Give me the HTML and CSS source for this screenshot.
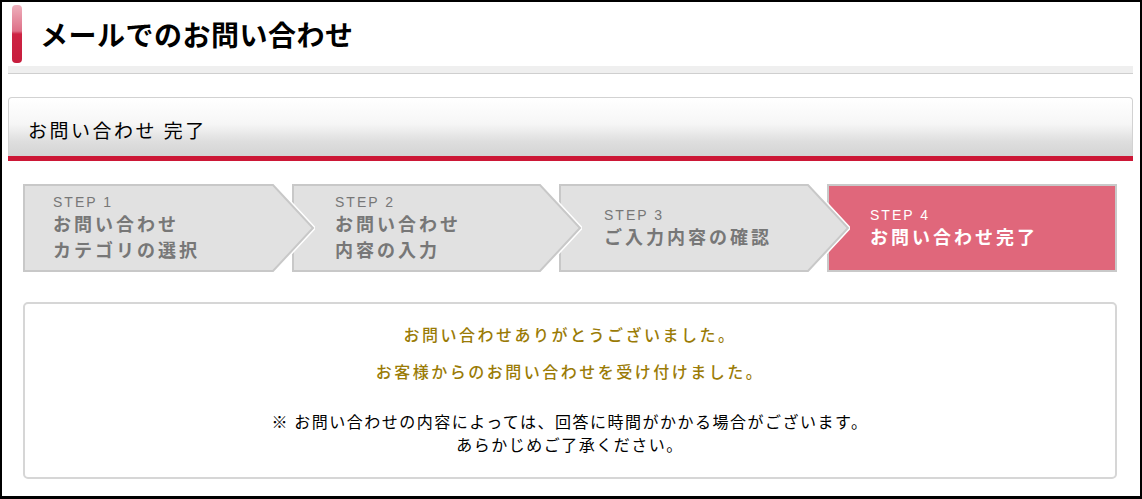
FILE: index.html
```html
<!DOCTYPE html>
<html lang="ja">
<head>
    <meta charset="UTF-8">
    <title>メールでのお問い合わせ</title>
    <link rel="stylesheet" href="styles.css">
</head>
<body>
<div class="page">
    <div class="page-title">
        <span class="title-bar"></span>
        <h1>メールでのお問い合わせ</h1>
    </div>
    <div class="title-band"></div>

    <div class="section-head">お問い合わせ 完了</div>
    <div class="section-line"></div>

    <!-- ステップ表示 -->
    <div class="steps">
        <div class="step step-1">
            <svg class="step-bg" width="292" height="88" viewBox="0 0 292 88">
                <polygon points="1,1 250,1 290,44 250,87 1,87" fill="#e1e1e1" stroke="#fff" stroke-width="5"/>
                <polygon points="1,1 250,1 290,44 250,87 1,87" fill="#e1e1e1" stroke="#c8c8c8" stroke-width="2"/>
            </svg>
            <div class="step-no">STEP 1</div>
            <div class="step-name">お問い合わせ</div>
            <div class="step-name">カテゴリの選択</div>
        </div>
        <div class="step step-2">
            <svg class="step-bg" width="290" height="88" viewBox="0 0 290 88">
                <polygon points="1,1 248,1 288,44 248,87 1,87" fill="#e1e1e1" stroke="#fff" stroke-width="5"/>
                <polygon points="1,1 248,1 288,44 248,87 1,87" fill="#e1e1e1" stroke="#c8c8c8" stroke-width="2"/>
            </svg>
            <div class="step-no">STEP 2</div>
            <div class="step-name">お問い合わせ</div>
            <div class="step-name">内容の入力</div>
        </div>
        <div class="step step-3">
            <svg class="step-bg" width="291" height="88" viewBox="0 0 291 88">
                <polygon points="1,1 249,1 289,44 249,87 1,87" fill="#e1e1e1" stroke="#fff" stroke-width="5"/>
                <polygon points="1,1 249,1 289,44 249,87 1,87" fill="#e1e1e1" stroke="#c8c8c8" stroke-width="2"/>
            </svg>
            <div class="step-no">STEP 3</div>
            <div class="step-name">ご入力内容の確認</div>
        </div>
        <div class="step step-4 current">
            <div class="step-no">STEP 4</div>
            <div class="step-name">お問い合わせ完了</div>
        </div>
    </div>

    <div class="message">
        <p class="thanks">お問い合わせありがとうございました。<br>お客様からのお問い合わせを受け付けました。</p>
        <p class="note">※ お問い合わせの内容によっては、回答に時間がかかる場合がございます。<br>あらかじめご了承ください。</p>
    </div>
</div>
</body>
</html>
```

FILE: styles.css
```css
body {
    margin: 0;
    padding: 0;
    background-color: #fff;
    font-family: "Noto Sans CJK JP", sans-serif;
    color: #000;
}
.page {
    width: 1142px;
    height: 499px;
    box-sizing: border-box;
    border: 2px solid #000;
    border-bottom-width: 3px;
    padding: 0 7px 0 6px;
    overflow: hidden;
}
.page-title {
    display: flex;
    align-items: center;
    padding: 3px 0 0 4px;
}
.title-bar {
    width: 10px;
    height: 58px;
    border-radius: 4px;
    background: linear-gradient(#eeb0bc, #de7088 45%, #cd2343 50%, #c71d3d);
}
h1 {
    margin: 0 0 0 18px;
    font-size: 28px;
    font-weight: bold;
    letter-spacing: 0.5px;
    line-height: 40px;
}
.title-band {
    margin-top: 3px;
    height: 7px;
    background-color: #efefef;
    border-bottom: 1px solid #cfcfcf;
}
.section-head {
    margin-top: 23px;
    height: 58px;
    padding-left: 19px;
    border: 1px solid #d2d2d2;
    border-bottom: none;
    border-radius: 4px 4px 0 0;
    background: linear-gradient(#fff 0%, #f6f6f6 45%, #dedede 75%, #d4d4d4 100%);
    font-size: 19px;
    letter-spacing: 2.5px;
    line-height: 64px;
}
.section-line {
    height: 5px;
    background-color: #cc1736;
}
.steps {
    display: flex;
    gap: 3px;
    margin: 23px 16px 0 15px;
    height: 88px;
}
.step {
    position: relative;
    box-sizing: border-box;
    height: 88px;
    display: flex;
    flex-direction: column;
    justify-content: center;
    padding-left: 43px;
    color: #777;
}
.step-bg {
    position: absolute;
    left: 0;
    top: 0;
    z-index: -1;
}
.step-1 { width: 266px; padding-left: 30px; z-index: 4; }
.step-2 { width: 264px; z-index: 3; }
.step-3 { width: 265px; z-index: 2; padding-left: 45px; }
.step-4 {
    flex: 1;
    z-index: 1;
    background-color: #e0677b;
    border: 2px solid #c9c9c9;
    padding-left: 41px;
    color: #fff;
}
.step-no, .step-name {
    position: relative;
}
.step-no {
    font-family: "Liberation Sans", Arial, sans-serif;
    font-size: 14px;
    letter-spacing: 2px;
    line-height: 16px;
}
.step-name {
    font-size: 18px;
    font-weight: bold;
    letter-spacing: 3px;
    line-height: 26px;
}
.message {
    margin: 30px 16px 0 15px;
    height: 177px;
    box-sizing: border-box;
    border: 2px solid #d6d6d6;
    border-radius: 5px;
    padding-top: 12px;
    text-align: center;
}
.message p {
    margin: 0;
}
.thanks {
    color: #9a7b06;
    font-size: 16px;
    font-weight: 500;
    letter-spacing: 2.5px;
    line-height: 37px;
}
.note {
    margin-top: 20px !important;
    font-size: 16px;
    letter-spacing: 1.5px;
    line-height: 23px;
}
```
